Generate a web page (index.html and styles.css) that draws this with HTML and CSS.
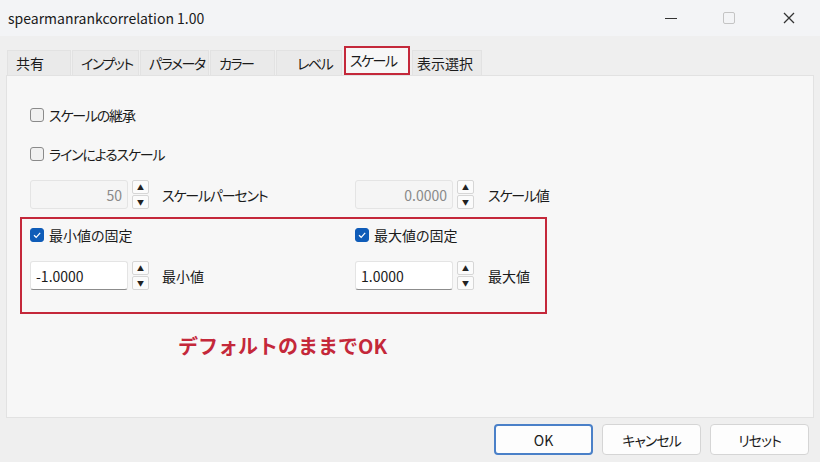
FILE: index.html
```html
<!DOCTYPE html>
<html lang="ja">
<head>
  <meta charset="UTF-8">
  <title>spearmanrankcorrelation 1.00</title>
  <link rel="stylesheet" href="styles.css">
</head>
<body>
  <div class="window">
    <!-- タイトルバー -->
    <div class="titlebar">
      <span class="title">spearmanrankcorrelation 1.00</span>
      <div class="controls">
        <span class="ctl min"></span>
        <span class="ctl max"></span>
        <span class="ctl close">
          <svg width="14" height="14" viewBox="0 0 14 14"><path d="M2 2 L12 12 M12 2 L2 12" stroke="#333" stroke-width="1.3" fill="none"/></svg>
        </span>
      </div>
    </div>

    <!-- タブ -->
    <div class="tabs">
      <div class="tab t1">共有</div>
      <div class="tab t2 k">インプット</div>
      <div class="tab t3 k">パラメータ</div>
      <div class="tab t4 k">カラー</div>
      <div class="tab t5 k">レベル</div>
      <div class="tab active k">スケール</div>
      <div class="tab t7">表示選択</div>
    </div>

    <!-- パネル -->
    <div class="panel">
      <label class="check row1"><span class="box"></span><span class="k">スケールの継承</span></label>
      <label class="check row2"><span class="box"></span><span class="k">ラインによるスケール</span></label>

      <div class="grid row3">
        <div class="field">
          <div class="input disabled">50</div>
          <div class="spin"><span>▲</span><span>▼</span></div>
          <span class="flabel k">スケールパーセント</span>
        </div>
        <div class="field">
          <div class="input disabled">0.0000</div>
          <div class="spin"><span>▲</span><span>▼</span></div>
          <span class="flabel k">スケール値</span>
        </div>
      </div>

      <div class="redbox">
        <div class="grid">
          <label class="check"><span class="box on"><svg width="10" height="10" viewBox="0 0 10 10"><path d="M2 5.2 L4.2 7.3 L8.2 2.8" stroke="#fff" stroke-width="1.2" fill="none"/></svg></span>最小値の固定</label>
          <label class="check"><span class="box on"><svg width="10" height="10" viewBox="0 0 10 10"><path d="M2 5.2 L4.2 7.3 L8.2 2.8" stroke="#fff" stroke-width="1.2" fill="none"/></svg></span>最大値の固定</label>
        </div>
        <div class="grid row5">
          <div class="field">
            <div class="input">-1.0000</div>
            <div class="spin"><span>▲</span><span>▼</span></div>
            <span class="flabel">最小値</span>
          </div>
          <div class="field">
            <div class="input">1.0000</div>
            <div class="spin"><span>▲</span><span>▼</span></div>
            <span class="flabel">最大値</span>
          </div>
        </div>
      </div>

      <p class="note">デフォルトのままでOK</p>
    </div>

    <!-- ボタン -->
    <div class="footer">
      <button class="btn ok">OK</button>
      <button class="btn k">キャンセル</button>
      <button class="btn k">リセット</button>
    </div>
  </div>
</body>
</html>
```

FILE: styles.css
```css
/* 全体 */
* {
  margin: 0;
  padding: 0;
  box-sizing: border-box;
  font-family: "Noto Sans CJK JP", "Noto Sans", sans-serif;
}

body {
  width: 820px;
  height: 462px;
  background-color: #efefef;
  color: #1b1b1b;
  font-size: 14px;
  font-feature-settings: "palt";
  overflow: hidden;
  white-space: nowrap;
}

/* カナの多いラベルは詰める */
.k {
  letter-spacing: -1.2px;
}

/* タイトルバー */
.titlebar {
  height: 36px;
  display: flex;
  align-items: center;
  justify-content: space-between;
  padding-left: 8px;
  background-color: #f3f4f6;
}

.title {
  font-size: 14px;
  color: #1a1a1a;
  font-feature-settings: normal;
}

.controls {
  display: flex;
  height: 100%;
}

.ctl {
  width: 58px;
  display: flex;
  align-items: center;
  justify-content: center;
}

.ctl.min::before {
  content: "";
  width: 12px;
  height: 1px;
  background-color: #333;
}

.ctl.max::before {
  content: "";
  width: 10px;
  height: 10px;
  border: 1px solid #c4c4c4;
  border-radius: 2px;
}

.ctl.close {
  width: 62px;
}

/* タブ */
.tabs {
  display: flex;
  align-items: flex-end;
  height: 39px;
  padding-left: 7px;
}

.tab {
  flex-shrink: 0;
  height: 25px;
  display: flex;
  align-items: center;
  padding-left: 8px;
  background-color: #eaeaea;
  border: 1px solid #e2e2e2;
  border-bottom: none;
  margin-right: 1px;
}

.tab.k {
  letter-spacing: -1.5px;
}

.t1 { width: 64px; }
.t2 { width: 67px; }
.t3 { width: 69px; }
.t4 { width: 65px; padding-left: 8px; }
.t5 { width: 66px; padding-left: 20px; }
.t7 { width: 70px; padding-left: 4px; margin-left: 1px; }

.tab.active {
  height: 29px;
  width: 66px;
  margin-left: 1px;
  padding-left: 4px;
  align-items: flex-start;
  padding-top: 2px;
  background-color: #f7f7f7;
  border: 2px solid #c4283a;
}

/* パネル */
.panel {
  height: 343px;
  margin: 0 6px;
  background-color: #f7f7f7;
  border: 1px solid #e2e2e2;
  padding: 29px 0 0 23px;
  display: flex;
  flex-direction: column;
}

.check {
  display: flex;
  align-items: center;
  height: 20px;
  gap: 5px;
}

.row2 {
  margin-top: 19px;
}

.box {
  width: 14px;
  height: 14px;
  border: 1px solid #8a8a8a;
  border-radius: 3px;
  background-color: #f0f0f0;
  display: flex;
  align-items: center;
  justify-content: center;
}

.box.on {
  background-color: #0f5cb8;
  border-color: #0f5cb8;
}

.grid {
  display: grid;
  grid-template-columns: 325px auto;
}

.row3 {
  margin-top: 16px;
}

.field {
  display: flex;
  align-items: center;
  height: 29px;
}

.input {
  width: 98px;
  height: 29px;
  display: flex;
  align-items: center;
  padding: 0 5px;
  background-color: #fff;
  border: 1px solid #e4e4e4;
  border-bottom: 1px solid #8c8c8c;
  border-radius: 3px;
}

.input.disabled {
  justify-content: flex-end;
  background-color: #f5f5f5;
  border-bottom-color: #e4e4e4;
  color: #8a8a8a;
}

.spin {
  display: flex;
  flex-direction: column;
  gap: 1px;
  margin-left: 4px;
}

.spin span {
  width: 17px;
  height: 14px;
  display: flex;
  align-items: center;
  justify-content: center;
  background-color: #fbfbfb;
  border: 1px solid #d6d6d6;
  border-radius: 2px;
  font-size: 7px;
  color: #222;
}

.flabel {
  margin-left: 13px;
}

.field:nth-child(2) .flabel {
  margin-left: 14px;
}

/* 赤枠 */
.redbox {
  width: 527px;
  height: 97px;
  margin-top: 8px;
  margin-left: -10px;
  padding: 6px 0 0 8px;
  border: 2px solid #c4283a;
}

.row5 {
  margin-top: 16px;
}

.note {
  margin-top: 17px;
  margin-left: 148px;
  font-size: 20px;
  font-weight: bold;
  font-feature-settings: normal;
  color: #c4283a;
}

/* ボタン */
.footer {
  display: flex;
  justify-content: flex-end;
  gap: 9px;
  padding: 6px 11px 0 0;
}

.btn {
  width: 99px;
  height: 31px;
  background-color: #fdfdfd;
  border: 1px solid #d5d5d5;
  border-radius: 4px;
  font-size: 14px;
  font-feature-settings: "palt";
  color: #1b1b1b;
}

.btn.k {
  letter-spacing: -1px;
}

.btn.ok {
  border: 2px solid #4a80c8;
}
```
